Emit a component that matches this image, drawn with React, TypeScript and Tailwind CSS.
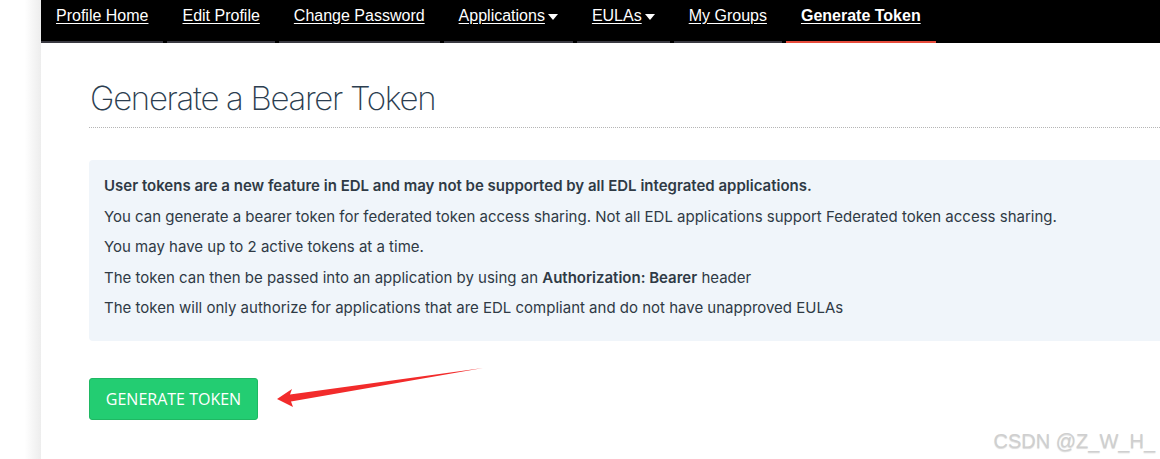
import React from "react";

const navItems = [
  { label: "Profile Home" },
  { label: "Edit Profile" },
  { label: "Change Password" },
  { label: "Applications", caret: true },
  { label: "EULAs", caret: true },
  { label: "My Groups" },
  { label: "Generate Token", active: true },
];

function Caret() {
  return (
    <svg width="10" height="6" viewBox="0 0 10 6" className="ml-[3px] mt-[1px]">
      <path d="M0 0 L10 0 L5 6 Z" fill="#fff" />
    </svg>
  );
}

export default function App() {
  return (
    <div className="relative flex min-h-[459px] w-full bg-white font-['Liberation_Sans',Arial,sans-serif]">
      {/* left gutter */}
      <div className="w-[41px] shrink-0 bg-gradient-to-r from-white from-60% to-[#ededed]" />

      <div className="flex min-w-0 flex-1 flex-col overflow-hidden">
        {/* top nav */}
        <div className="flex h-[43px] gap-1 bg-black">
          {navItems.map((item) => (
            <a
              key={item.label}
              href="#"
              className={
                "flex h-[43px] items-start border-b-2 px-[15px] pt-[6px] text-[16px] leading-[20px] text-white underline underline-offset-2 " +
                (item.active ? "border-[#e74c3c] font-bold" : "border-[#3a3a42]")
              }
            >
              <span className="flex items-center">
                {item.label}
                {item.caret && <Caret />}
              </span>
            </a>
          ))}
        </div>

        {/* content */}
        <div className="flex flex-col pl-[48px]">
          <h1 className="mt-[36px] border-b border-dotted border-[#b5b5b5] pb-[10px] pl-px font-['Inter',sans-serif] text-[33px] leading-[38px] font-extralight tracking-[-1.3px] text-[#2c3e50]">
            Generate a Bearer Token
          </h1>

          <div className="-mr-4 mt-[32px] rounded-[4px] bg-[#f0f5fa] px-[15px] pt-[15px] pb-[13px] font-['Inter',sans-serif] text-[15px] leading-[21.5px] text-[#2f3a45]">
            <p className="mb-[9px] font-semibold">
              User tokens are a new feature in EDL and may not be supported by all EDL integrated applications.
            </p>
            <p className="mb-[9px]">
              You can generate a bearer token for federated token access sharing. Not all EDL applications support Federated token access sharing.
            </p>
            <p className="mb-[9px]">You may have up to 2 active tokens at a time.</p>
            <p className="mb-[9px]">
              The token can then be passed into an application by using an <span className="font-semibold">Authorization: Bearer</span> header
            </p>
            <p className="mb-[9px]">
              The token will only authorize for applications that are EDL compliant and do not have unapproved EULAs
            </p>
          </div>

          <div className="mt-[37px]">
            <button className="h-[42px] w-[169px] rounded-[3px] border border-[#1fb863] bg-[#23cd72] font-['Open_Sans',sans-serif] text-[16px] font-medium text-white uppercase">
              Generate Token
            </button>
          </div>
        </div>
      </div>

      {/* annotation arrow */}
      <svg className="pointer-events-none absolute left-0 top-0" width="1160" height="459">
        <polygon points="277,399 292,389 290,394.5 483,368 291,401.5 293,407" fill="#f22b2b" />
      </svg>

      {/* watermark */}
      <div className="pointer-events-none absolute right-[5px] bottom-[6px] text-[20px] leading-[24px] text-[#cfcfcf] [text-shadow:0_1px_1px_rgba(0,0,0,0.15)]">
        CSDN @Z_W_H_
      </div>
    </div>
  );
}
